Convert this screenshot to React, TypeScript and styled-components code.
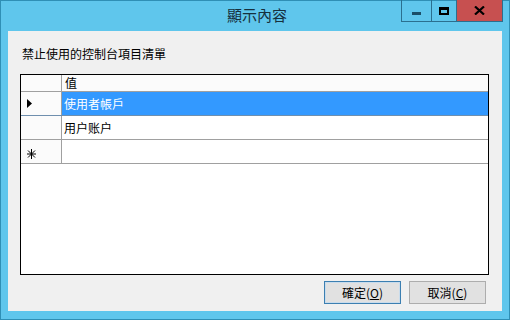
import React from 'react';
import styled, { createGlobalStyle } from 'styled-components';

const GlobalStyle = createGlobalStyle`
  html, body {
    margin: 0;
    padding: 0;
    background: #5fc6ec;
  }
  * {
    box-sizing: border-box;
  }
`;

const rows = [
  { id: 1, value: '使用者帳戶', selected: true },
  { id: 2, value: '用户账户', selected: false },
];

const App = () => {
  return (
    <>
      <GlobalStyle />
      <Window>
        <TitleBar>
          <span />
          <Title>顯示內容</Title>
          <Controls>
            <ControlButton width={29}>
              <MinGlyph />
            </ControlButton>
            <ControlButton width={25}>
              <MaxGlyph />
            </ControlButton>
            <ControlButton width={46} close>
              <svg width="11" height="9" viewBox="0 0 11 9">
                <path d="M1 0.5 L10 8.5 M10 0.5 L1 8.5" stroke="#000" strokeWidth="2.2" />
              </svg>
            </ControlButton>
          </Controls>
        </TitleBar>
        <Client>
          <Label>禁止使用的控制台項目清單</Label>
          <Grid>
            <HeaderRow>
              <RowHeadCell />
              <HeadCell>值</HeadCell>
            </HeaderRow>
            {rows.map((row) => (
              <Row key={row.id} selected={row.selected}>
                <RowHeadCell>
                  {row.selected && (
                    <svg width="5" height="9" viewBox="0 0 5 9">
                      <path d="M0 0 L5 4.5 L0 9 Z" fill="#000" />
                    </svg>
                  )}
                </RowHeadCell>
                <Cell selected={row.selected}>{row.value}</Cell>
              </Row>
            ))}
            <Row>
              <RowHeadCell>
                {/* new-row marker */}
                <NewRowMark width="9" height="10" viewBox="0 0 9 10">
                  <path
                    d="M4.5 0 V10 M0 5 H9 M1 1.5 L8 8.5 M8 1.5 L1 8.5"
                    stroke="#000"
                    strokeWidth="1"
                  />
                </NewRowMark>
              </RowHeadCell>
              <Cell />
            </Row>
          </Grid>
          <Footer>
            <Button primary>
              確定(<u>O</u>)
            </Button>
            <Button>
              取消(<u>C</u>)
            </Button>
          </Footer>
        </Client>
      </Window>
    </>
  );
};

const Window = styled.div`
  width: 510px;
  height: 320px;
  background: #5fc6ec;
  border: 1px solid #2f8fb5;
  display: flex;
  flex-direction: column;
  font-family: 'Noto Sans CJK TC', 'Noto Sans', sans-serif;
`;

const TitleBar = styled.div`
  height: 30px;
  display: grid;
  grid-template-columns: 1fr auto 1fr;
  align-items: start;
`;

const Title = styled.div`
  padding-top: 4px;
  padding-left: 4px;
  font-size: 15px;
  line-height: 20px;
  color: #16303d;
`;

const Controls = styled.div`
  justify-self: end;
  margin-top: -1px;
  margin-right: 6px;
  display: flex;
  height: 22px;
  border: 1px solid #2b6f8f;
  border-top: none;
`;

const ControlButton = styled.div<{ width: number; close?: boolean }>`
  width: ${({ width }) => width}px;
  height: 100%;
  display: flex;
  align-items: center;
  justify-content: center;
  background: ${({ close }) => (close ? '#c75050' : 'transparent')};
  border-left: 1px solid #2b6f8f;
  &:first-child {
    border-left: none;
  }
`;

const MinGlyph = styled.div`
  width: 9px;
  height: 3px;
  background: #1b4f68;
  margin-top: 5px;
`;

const MaxGlyph = styled.div`
  width: 10px;
  height: 8px;
  border: 2px solid #000;
  border-top-width: 3px;
`;

const Client = styled.div`
  flex: 1;
  margin: 0 7px 8px 7px;
  background: #f0f0f0;
  display: flex;
  flex-direction: column;
  padding: 15px 13px 7px 12px;
`;

const Label = styled.div`
  font-size: 12px;
  line-height: 16px;
  color: #000;
  margin-left: 2px;
  margin-bottom: 12px;
`;

const Grid = styled.div`
  height: 201px;
  background: #fff;
  border: 1px solid #000;
  display: flex;
  flex-direction: column;
`;

const HeaderRow = styled.div`
  display: flex;
  height: 17px;
  border-bottom: 1px solid #a0a0a0;
`;

const Row = styled.div<{ selected?: boolean }>`
  display: flex;
  height: 24px;
  border-bottom: 1px solid ${({ selected }) => (selected ? '#6f8fae' : '#a0a0a0')};
`;

const RowHeadCell = styled.div`
  width: 41px;
  flex-shrink: 0;
  display: flex;
  align-items: center;
  padding-left: 6px;
  background: #fbfbfb;
  border-right: 1px solid #a0a0a0;
`;

const NewRowMark = styled.svg`
  margin-top: 4px;
`;

const HeadCell = styled.div`
  flex: 1;
  font-size: 12px;
  line-height: 16px;
  padding-left: 3px;
  color: #000;
  background: #fbfbfb;
`;

const Cell = styled.div<{ selected?: boolean }>`
  flex: 1;
  display: flex;
  align-items: center;
  padding-left: 2px;
  font-size: 12px;
  color: ${({ selected }) => (selected ? '#fff' : '#000')};
  background: ${({ selected }) => (selected ? '#3399ff' : '#fff')};
`;

const Footer = styled.div`
  margin-top: 6px;
  display: flex;
  justify-content: flex-end;
  gap: 8px;
  padding-right: 3px;
`;

const Button = styled.div<{ primary?: boolean }>`
  width: 77px;
  height: 23px;
  display: flex;
  align-items: center;
  justify-content: center;
  font-size: 12px;
  color: #000;
  background: #e1e1e1;
  border: 1px solid ${({ primary }) => (primary ? '#3c7fb1' : '#adadad')};
  ${({ primary }) => primary && 'box-shadow: inset 0 0 0 1px #c9dcec;'}
`;

export default App;
